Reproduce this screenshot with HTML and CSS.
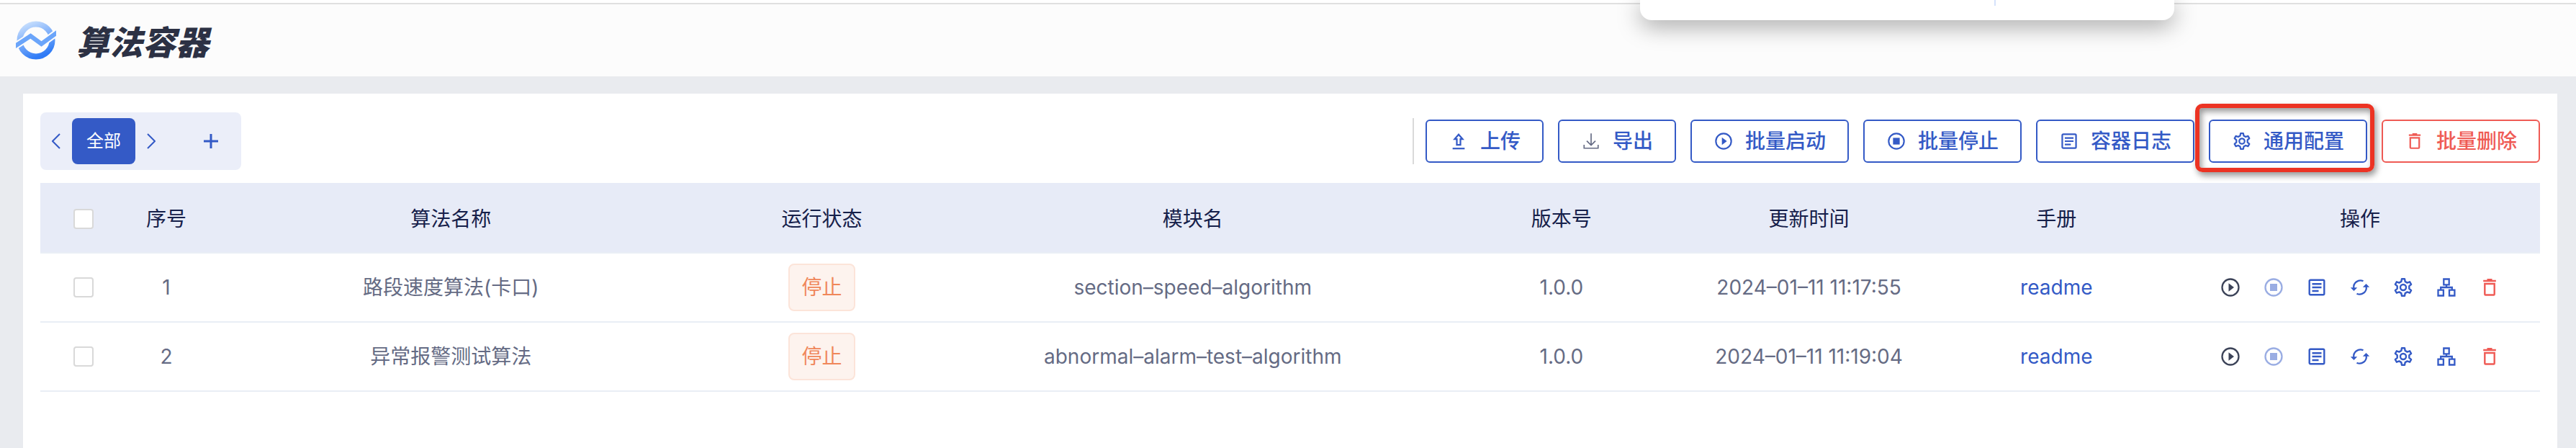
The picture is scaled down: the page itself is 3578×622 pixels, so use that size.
FILE: index.html
```html
<!DOCTYPE html>
<html lang="zh-CN">
<head>
<meta charset="utf-8">
<title>算法容器</title>
<link rel="stylesheet" href="styles.css">
</head>
<body>
<svg class="sprite" aria-hidden="true">
  <symbol id="i-play" viewBox="0 0 28 28"><circle cx="14" cy="14" r="11.500" fill="none" stroke="currentColor" stroke-width="2.300"/><path d="M11.500 8.300L19 14l-7.500 5.700z" fill="currentColor"/></symbol>
  <symbol id="i-stop" viewBox="0 0 28 28"><circle cx="14" cy="14" r="11.500" fill="none" stroke="currentColor" stroke-width="2.300"/><path d="M9 9h10v10H9z" fill="currentColor"/></symbol>
  <symbol id="i-doc" viewBox="0 0 28 28"><g fill="none" stroke="currentColor" stroke-width="2.400"><rect x="3.700" y="3.700" width="20.600" height="20.600" rx="1.500"/><path d="M7.500 9.200h13M7.500 14h13M7.500 19h9"/></g></symbol>
  <symbol id="i-sync" viewBox="0 0 28 28"><g fill="none" stroke="currentColor" stroke-width="2.300"><path d="M18.500 5.300A9.300 9.300 0 0 0 5.300 15"/><path d="M9.500 22.700A9.300 9.300 0 0 0 22.700 13"/></g><path d="M.8 14.200h9.400L5.500 19zM17.800 13.800h9.400L22.500 9z" fill="currentColor"/></symbol>
  <symbol id="i-gear" viewBox="0 0 28 28"><g fill="none" stroke="currentColor" stroke-width="2.400" stroke-linejoin="round"><path d="M12 2.300h4l.7 3.600 2.900 1.700 3.500-1.300 2 3.500-2.800 2.400v3.600l2.800 2.400-2 3.500-3.500-1.300-2.900 1.700-.7 3.600h-4l-.7-3.600-2.900-1.700-3.500 1.300-2-3.500 2.800-2.400v-3.600L2.900 9.800l2-3.500 3.500 1.300 2.900-1.700z"/><circle cx="14" cy="14" r="4"/></g></symbol>
  <symbol id="i-tree" viewBox="0 0 28 28"><g fill="none" stroke="currentColor" stroke-width="2.300"><path d="M10.300 2.500h7.400v7.800h-7.400zM2.500 17.700h7.400v7.800H2.500zM18 17.700h7.400v7.800H18zM14 10.300V14M6.200 17.700V14h15.600v3.700"/></g></symbol>
  <symbol id="i-trash" viewBox="0 0 28 28"><g fill="none" stroke="currentColor" stroke-width="2.400"><path d="M5.200 5h17.600M10.500 3.300h7M7.300 9h13.400v14.500q0 1-1 1H8.300q-1 0-1-1z"/></g></symbol>
  <symbol id="i-upload" viewBox="0 0 28 28"><g fill="none" stroke="currentColor" stroke-width="2.400"><path d="M5 25h18"/><path d="M14 4l6 7h-3.300v8.500h-5.400V11H8z"/></g></symbol>
  <symbol id="i-download" viewBox="0 0 28 28"><g fill="none" stroke="currentColor" stroke-width="1.800"><path d="M14 2.500V20M7.500 13.500L14 20l6.500-6.500M3.500 19.500v5h21v-5"/></g></symbol>
</svg>

<header class="header">
  <svg class="logo" viewBox="0 0 56 56" aria-hidden="true">
    <defs><linearGradient id="ring" x1="0.200" y1="0" x2="0.600" y2="1"><stop offset="0" stop-color="#c3dcfd"/><stop offset="1" stop-color="#2f7bf6"/></linearGradient></defs>
    <circle cx="28" cy="28" r="22.500" fill="none" stroke="url(#ring)" stroke-width="8"/>
    <path d="M-4 38L20.500 22 35.500 33 60 15" fill="none" stroke="#fcfcfc" stroke-width="10"/>
    <path d="M-4 38L20.500 22 35.500 33 60 15" fill="none" stroke="#6ba5fa" stroke-width="6"/>
  </svg>
  <h1 class="title">算法容器</h1>
</header>

<div class="popup"><span class="popup-divider"></span></div>

<main class="panel">
  <div class="toolbar">
    <nav class="tabs">
      <button class="tab-arrow" aria-label="上一个"><svg viewBox="0 0 12 22"><path d="M11 1L1 11l10 10"/></svg></button>
      <button class="tab">全部</button>
      <button class="tab-arrow" aria-label="下一个"><svg viewBox="0 0 12 22"><path d="M1 1l10 10L1 21"/></svg></button>
      <button class="tab-add" aria-label="新增"><svg viewBox="0 0 20 20"><path d="M10 0v20M0 10h20"/></svg></button>
    </nav>
    <div class="actions">
      <button class="btn"><svg class="icon"><use href="#i-upload"/></svg>上传</button>
      <button class="btn"><svg class="icon icon-muted"><use href="#i-download"/></svg>导出</button>
      <button class="btn"><svg class="icon"><use href="#i-play"/></svg>批量启动</button>
      <button class="btn"><svg class="icon"><use href="#i-stop"/></svg>批量停止</button>
      <button class="btn"><svg class="icon"><use href="#i-doc"/></svg>容器日志</button>
      <div class="marked"><button class="btn"><svg class="icon"><use href="#i-gear"/></svg>通用配置</button></div>
      <button class="btn btn-danger"><svg class="icon"><use href="#i-trash"/></svg>批量删除</button>
    </div>
  </div>

  <table class="table">
    <colgroup><col class="c-check"><col class="c-no"><col class="c-name"><col class="c-state"><col class="c-name"><col class="c-mid"><col class="c-mid"><col class="c-mid"><col class="c-ops"></colgroup>
    <thead>
      <tr><th><input type="checkbox" class="check" aria-label="全选"></th><th>序号</th><th>算法名称</th><th>运行状态</th><th>模块名</th><th>版本号</th><th>更新时间</th><th>手册</th><th>操作</th></tr>
    </thead>
    <tbody>
      <tr>
        <td><input type="checkbox" class="check" aria-label="选择 1"></td><td>1</td><td>路段速度算法(卡口)</td><td><span class="badge">停止</span></td><td>section–speed–algorithm</td><td>1.0.0</td><td>2024–01–11 11:17:55</td><td><a class="link" href="#">readme</a></td>
        <td><div class="ops">
          <button class="op op-dark" aria-label="启动"><svg class="icon"><use href="#i-play"/></svg></button>
          <button class="op op-off" aria-label="停止"><svg class="icon"><use href="#i-stop"/></svg></button>
          <button class="op" aria-label="日志"><svg class="icon"><use href="#i-doc"/></svg></button>
          <button class="op" aria-label="重启"><svg class="icon"><use href="#i-sync"/></svg></button>
          <button class="op" aria-label="配置"><svg class="icon"><use href="#i-gear"/></svg></button>
          <button class="op" aria-label="拓扑"><svg class="icon"><use href="#i-tree"/></svg></button>
          <button class="op op-danger" aria-label="删除"><svg class="icon"><use href="#i-trash"/></svg></button>
        </div></td>
      </tr>
      <tr>
        <td><input type="checkbox" class="check" aria-label="选择 2"></td><td>2</td><td>异常报警测试算法</td><td><span class="badge">停止</span></td><td>abnormal–alarm–test–algorithm</td><td>1.0.0</td><td>2024–01–11 11:19:04</td><td><a class="link" href="#">readme</a></td>
        <td><div class="ops">
          <button class="op op-dark" aria-label="启动"><svg class="icon"><use href="#i-play"/></svg></button>
          <button class="op op-off" aria-label="停止"><svg class="icon"><use href="#i-stop"/></svg></button>
          <button class="op" aria-label="日志"><svg class="icon"><use href="#i-doc"/></svg></button>
          <button class="op" aria-label="重启"><svg class="icon"><use href="#i-sync"/></svg></button>
          <button class="op" aria-label="配置"><svg class="icon"><use href="#i-gear"/></svg></button>
          <button class="op" aria-label="拓扑"><svg class="icon"><use href="#i-tree"/></svg></button>
          <button class="op op-danger" aria-label="删除"><svg class="icon"><use href="#i-trash"/></svg></button>
        </div></td>
      </tr>
    </tbody>
  </table>
</main>
</body>
</html>
```

FILE: styles.css
```css
* { box-sizing: border-box; }

body {
  margin: 0;
  min-height: 100vh;
  display: flex;
  flex-direction: column;
  background: #e9ebef;
  border-top: 4px solid #fff;
  color: #656b84;
  font: 28px/40px Inter, "Noto Sans CJK SC", sans-serif;
  overflow-x: hidden;
}

button {
  margin: 0;
  padding: 0;
  border: 0;
  background: none;
  color: inherit;
  font: inherit;
  cursor: pointer;
}

.sprite { position: absolute; width: 0; height: 0; }

.header {
  display: flex;
  align-items: center;
  gap: 28px;
  height: 102px;
  padding: 0 22px;
  border-top: 2px solid #e0e0e0;
  background: #fcfcfc;
}

.logo { width: 56px; height: 56px; }

.title {
  margin: 0;
  color: #2c3144;
  font: italic 900 46px/64px "Noto Sans CJK SC", sans-serif;
}

/* Floating card that hangs over the header */
.popup {
  position: absolute;
  top: 0;
  right: 558px;
  width: 742px;
  height: 28px;
  border-radius: 0 0 16px 16px;
  background: #fff;
  box-shadow: 0 8px 32px rgba(0, 0, 0, 0.36);
}

.popup-divider {
  position: absolute;
  top: 0;
  right: 248px;
  width: 2px;
  height: 8px;
  background: #d5e2fb;
}

.panel {
  flex: 1;
  margin: 24px 26px 0 32px;
  padding: 26px 24px;
  background: #fff;
}

.toolbar {
  display: flex;
  align-items: center;
  justify-content: space-between;
  margin-bottom: 18px;
}

.tabs {
  display: flex;
  align-items: center;
  height: 80px;
  padding-right: 32px;
  border-radius: 8px;
  background: #ebeef9;
}

.tab-arrow, .tab-add {
  display: flex;
  align-items: center;
  justify-content: center;
  width: 44px;
  height: 64px;
}

.tab-arrow svg, .tab-add svg { fill: none; stroke: #345ac6; stroke-width: 2; }
.tab-arrow svg { width: 12px; height: 22px; }
.tab-add { width: 20px; margin-left: 51px; }
.tab-add svg { width: 20px; height: 20px; stroke-width: 3; }

.tab {
  width: 88px;
  height: 64px;
  border-radius: 8px;
  background: #345ac6;
  color: #fff;
  font-size: 24px;
}

.actions {
  display: flex;
  align-items: center;
  gap: 20px;
  height: 64px;
  padding-left: 16px;
  border-left: 2px solid #d9d9d9;
}

.btn {
  display: flex;
  align-items: center;
  gap: 16px;
  height: 60px;
  padding: 0 30px;
  border: 2px solid #345ac6;
  border-radius: 6px;
  color: #345ac6;
  font-weight: 500;
  white-space: nowrap;
}

.btn .icon { padding: 1px; }
.btn-danger { border-color: #ef5b55; color: #ef5b55; }

.icon { display: block; width: 28px; height: 28px; }
.icon-muted { color: #656b84; }

/* Red annotation frame round one button */
.marked { position: relative; }

.marked::after {
  content: "";
  position: absolute;
  inset: -22px -10px -13px -19px;
  border: 6px solid #ec3323;
  border-radius: 10px;
  box-shadow: 3px 5px 8px rgba(0, 0, 0, 0.4), inset 3px 5px 8px rgba(0, 0, 0, 0.4);
  pointer-events: none;
}

.table {
  width: 100%;
  border-spacing: 0;
  table-layout: fixed;
  text-align: center;
}

.c-check { width: 120px; }
.c-no { width: 110px; }
.c-name { width: 19.6%; }
.c-state { width: 350px; }
.c-mid { width: 9.9%; }

th, td {
  height: 96px;
  padding: 0;
  border-bottom: 2px solid #e9eef5;
}

th {
  height: 98px;
  padding-top: 4px;
  background: #e7ebf7;
  color: #16204a;
  font-weight: 400;
}

.check {
  display: block;
  appearance: none;
  width: 28px;
  height: 28px;
  margin: 0 auto;
  border: 2px solid #d9d9d9;
  border-radius: 4px;
  background: #fff;
}

.badge {
  display: inline-block;
  padding: 11px 16px;
  border: 2px solid #fce4d9;
  border-radius: 8px;
  background: #fdf3ee;
  color: #f0875a;
}

.link { color: #345ac6; text-decoration: none; }

.ops { display: flex; justify-content: center; gap: 32px; }
.op { color: #345ac6; }
.op-dark { color: #3c4358; }
.op-off { color: #9aade3; }
.op-danger { color: #ef5b55; }
```
